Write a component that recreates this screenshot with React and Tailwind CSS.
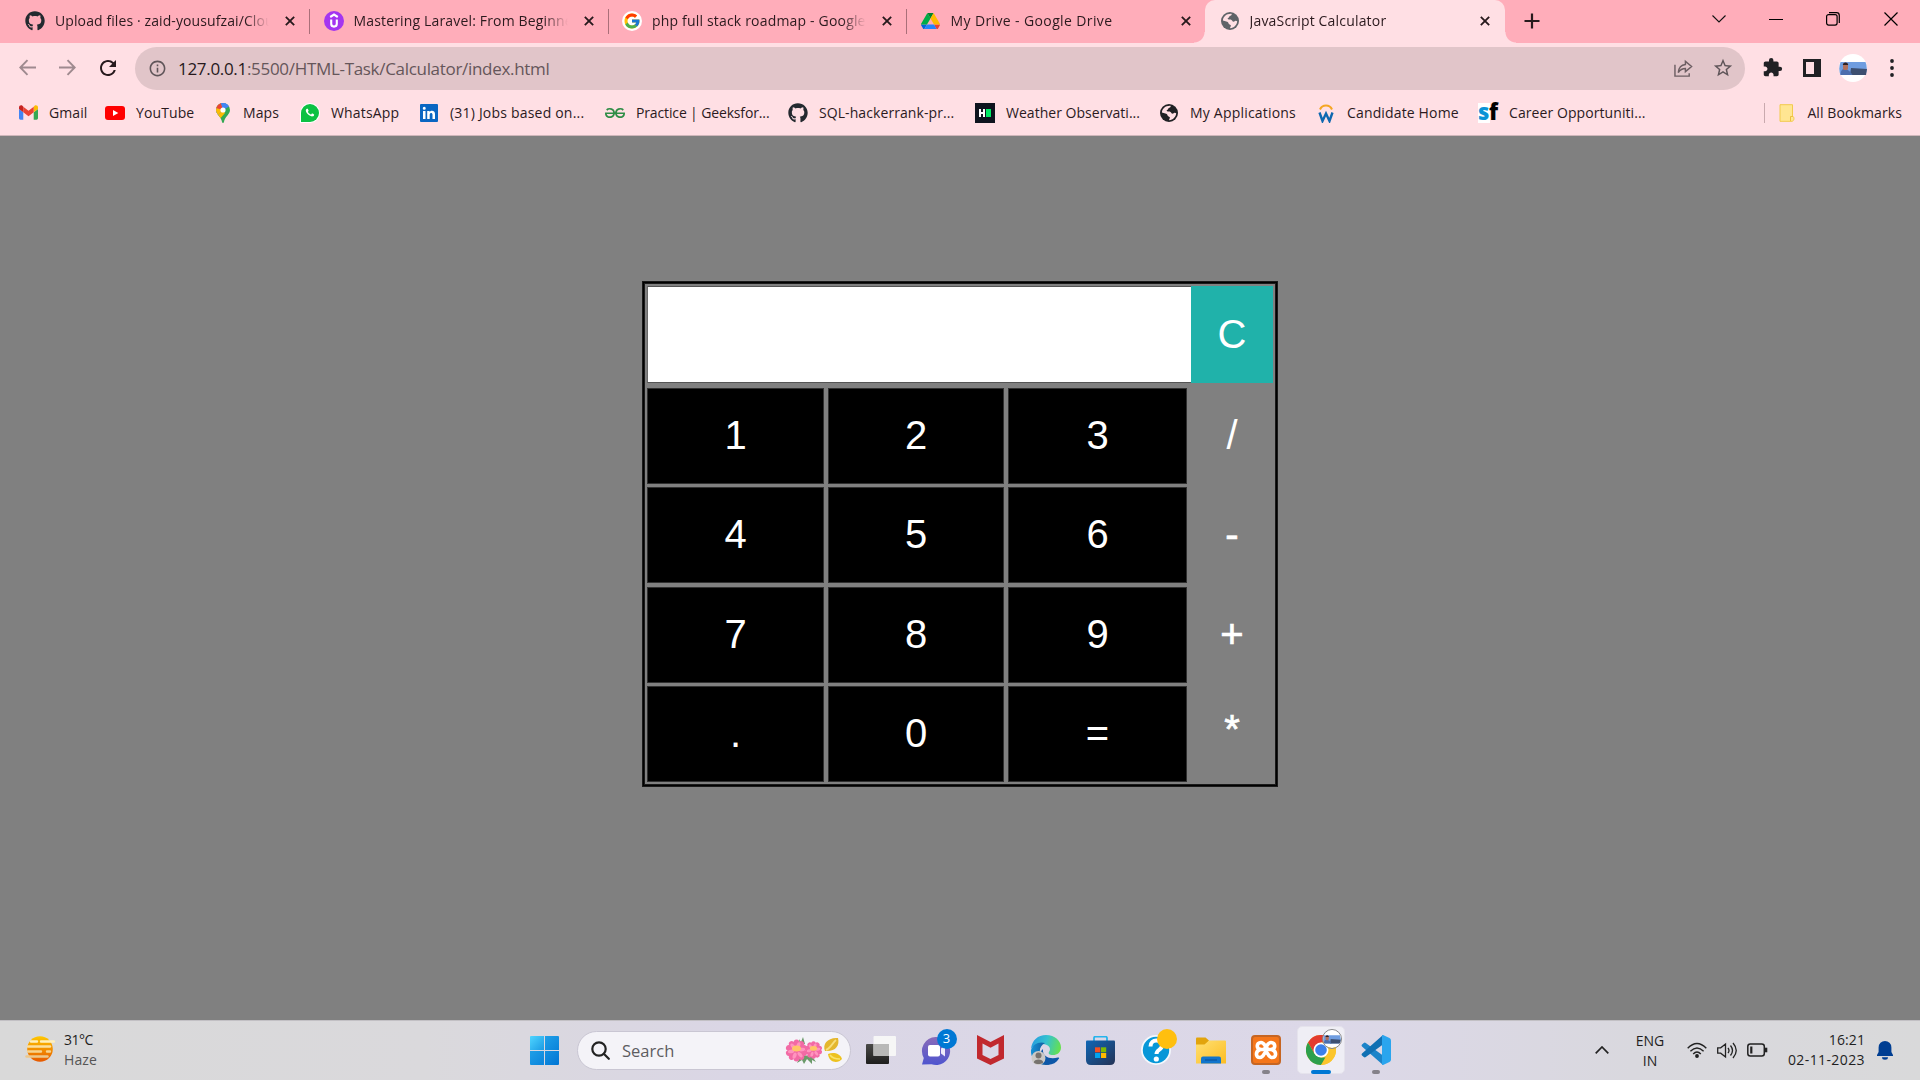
import React from "react";
import { FaGithub, FaWhatsapp } from "react-icons/fa";
import { FcGoogle } from "react-icons/fc";
import { SiGeeksforgeeks } from "react-icons/si";
import { MdRefresh, MdExtension, MdStarBorder, MdInfoOutline } from "react-icons/md";

const Cross = ({ className = "size-[11px]" }) => (
  <svg viewBox="0 0 12 12" className={className} fill="none" stroke="#27191c" strokeWidth="2.200">
    <path d="M1 1 11 11M11 1 1 11" />
  </svg>
);

const Globe = ({ className }) => (
  <svg viewBox="0 0 18 18" className={className}>
    <circle cx="9" cy="9" r="9" fill="currentColor" />
    <path d="M10.500 1.800c.6 1.200-.2 1.800-1.500 2.200-1.200.4-.6 1.600-1.800 2-1.200.3-.3 1.600.8 1.500 1.800-.2 3 .2 3.400 1.600.3.900 1.600.7 2.300.1 1-.8 1.800-.4 2.500 0C15.800 13 13 16 9.300 16.200c-.6-1 .8-1.500.6-2.600-.1-1.200-2.300-1-2.500-2.600C7.200 9.500 4 9.300 1.900 8.500 2.200 4.500 5.500 1.500 10.500 1.800z" fill="#ffdfe4" />
    <path d="M9 4.200c1.200-.2 2.500-.4 2.500-1.700l3.500 2 1 3.500c-1.500-.3-2.500.8-3.300.6C11.800 7 10 6.400 8 6.700z" fill="currentColor" />
  </svg>
);

const Udemy = () => (
  <svg viewBox="0 0 20 20" className="size-5">
    <circle cx="10" cy="10" r="10" fill="#a435f0" />
    <path d="M6.200 6 10 3.600 13.800 6M7.200 8.600v4.200a2.800 2.800 0 0 0 5.600 0V8.600" fill="none" stroke="#fff" strokeWidth="2.100" />
  </svg>
);

const GoogleTab = () => (
  <span className="flex size-5 items-center justify-center rounded-full bg-white">
    <FcGoogle className="size-[18px]" />
  </span>
);

const Drive = () => (
  <svg viewBox="0 0 87.3 78" className="w-[19px]">
    <path d="m6.6 66.85 3.85 6.65c.8 1.4 1.95 2.5 3.3 3.3l13.75-23.8h-27.5c0 1.55.4 3.1 1.2 4.5z" fill="#0066da" />
    <path d="m43.65 25-13.75-23.8c-1.35.8-2.5 1.9-3.3 3.3l-25.4 44a9 9 0 0 0-1.2 4.5h27.5z" fill="#00ac47" />
    <path d="m73.55 76.8c1.35-.8 2.5-1.9 3.3-3.3l1.6-2.75 7.65-13.25c.8-1.4 1.2-2.95 1.2-4.5h-27.5l5.85 11.5z" fill="#ea4335" />
    <path d="m43.65 25 13.75-23.8c-1.35-.8-2.9-1.2-4.5-1.2h-18.5c-1.6 0-3.15.45-4.5 1.2z" fill="#00832d" />
    <path d="m59.8 53h-32.3l-13.75 23.8c1.35.8 2.9 1.2 4.5 1.2h50.8c1.6 0 3.15-.45 4.5-1.2z" fill="#2684fc" />
    <path d="m73.4 26.5-12.7-22c-.8-1.4-1.95-2.5-3.3-3.3l-13.75 23.8 16.15 28h27.45c0-1.55-.4-3.1-1.2-4.5z" fill="#ffba00" />
  </svg>
);

const Gmail = () => (
  <svg viewBox="0 0 20 16" className="w-[19px]">
    <path d="M1.500 15.500h3V7.700L0 4.300V14a1.500 1.500 0 0 0 1.500 1.500z" fill="#4285f4" />
    <path d="M15.500 15.500h3A1.500 1.500 0 0 0 20 14V4.300l-4.500 3.400z" fill="#34a853" />
    <path d="M15.500 1.800v5.900L20 4.300V2.500c0-2-2.200-2.800-3.600-1.700z" fill="#fbbc04" />
    <path d="M4.500 7.700V1.800L10 6l5.500-4.200v5.900L10 11.900z" fill="#ea4335" />
    <path d="M0 2.500v1.800l4.500 3.400V1.800l-.9-1C2.200-.3 0 .5 0 2.500z" fill="#c5221f" />
  </svg>
);

const YouTube = () => (
  <svg viewBox="0 0 20 14" className="w-5">
    <rect width="20" height="14" rx="3" fill="#f00" />
    <path d="M8 4v6l5.300-3z" fill="#fff" />
  </svg>
);

const MapsPin = () => (
  <svg viewBox="0 0 14 20" className="ml-[2px] h-5">
    <defs>
      <clipPath id="pin"><path d="M7 0a7 7 0 0 0-7 7c0 4.500 5.200 6.500 6.100 12.200.2 1 1.600 1 1.800 0C8.800 13.500 14 11.500 14 7a7 7 0 0 0-7-7z" /></clipPath>
    </defs>
    <g clipPath="url(#pin)">
      <rect width="14" height="20" fill="#34a853" />
      <path d="M0 0h14L0 15z" fill="#4285f4" />
      <path d="M0 0h4.500L7 7-1 15z" fill="#fbbc04" />
      <path d="M0 0h5l2 7-7-2z" fill="#ea4335" />
      <path d="M5 0h9v3L7 7z" fill="#4285f4" />
      <path d="M-1 15 7 7l2 3-6 7z" fill="#fbbc04" />
    </g>
    <circle cx="7" cy="7" r="2.600" fill="#fff" />
  </svg>
);

const WhatsApp = () => (
  <span className="flex size-5 items-center justify-center rounded-full rounded-bl-none bg-white">
    <span className="flex size-[18px] items-center justify-center rounded-full rounded-bl-sm bg-[#0cc143]">
      <FaWhatsapp className="size-[19px] text-white [clip-path:circle(30%)]" />
    </span>
  </span>
);

const LinkedIn = () => (
  <svg viewBox="0 0 18 18" className="size-[18px]">
    <rect width="18" height="18" rx="1" fill="#0a66c2" />
    <path d="M3 7h2.500v8H3zM4.250 2.700a1.500 1.500 0 1 1 0 3 1.500 1.500 0 0 1 0-3zM7.200 7h2.400v1.100C10.800 6.200 15 6.200 15 10v5h-2.500v-4.500c0-2.200-2.800-2-2.800 0V15H7.200z" fill="#fff" />
  </svg>
);

const HackerRank = () => (
  <svg viewBox="0 0 20 20" className="size-5">
    <rect width="20" height="20" fill="#0e141e" />
    <path d="M4 6h2v3h2V6h2v8H8v-3H6v3H4z" fill="#fff" />
    <rect x="11" y="6" width="5" height="8" fill="#00ea64" />
  </svg>
);

const Workday = () => (
  <svg viewBox="0 0 18 20" className="h-5 w-[18px]">
    <path d="M3 6.500a6.500 6.500 0 0 1 12 0" fill="none" stroke="#f5a623" strokeWidth="2" />
    <path d="m2.500 9.500 3 8.500L9 10.500l3.500 7.500 3-8.500" fill="none" stroke="#0f68b0" strokeWidth="2.400" />
  </svg>
);

const SuccessFactors = () => (
  <span className="flex h-5 w-5 items-center bg-[linear-gradient(90deg,#fff_60%,#ffdfe4_60%)] pb-[3px] font-['Open_Sans',sans-serif] text-[22px] leading-5 font-extrabold tracking-[-0.5px]">
    <span className="text-[#0a93d6]">s</span>
    <span className="text-black">f</span>
  </span>
);

const Avatar = ({ className }) => (
  <svg viewBox="0 0 28 28" className={className}>
    <circle cx="14" cy="14" r="14" fill="#fff" />
    <path d="M1.500 8h25q2.500 6 0 13h-25q-2.500-6 0-13z" fill="#6f9de0" />
    <path d="M12 14l16 1-1 6H11z" fill="#3d4f70" />
    <path d="M1.500 21c0-5 2-6 4-6s5 1 8 6z" fill="#4c6fae" />
    <path d="M4 10.500c0-2.500 5-2.500 5 0v4c0 2-5 2-5 0z" fill="#b0705c" />
    <path d="M3.800 11c0-3.500 5.400-3.500 5.400 0z" fill="#2b2226" />
  </svg>
);

const tabs = [
  { title: "Upload files · zaid-yousufzai/Clou", icon: <FaGithub className="size-5 text-[#24292f]" />, track: "tracking-[0.1px]" },
  { title: "Mastering Laravel: From Beginne", icon: <Udemy />, track: "tracking-[0.16px]" },
  { title: "php full stack roadmap - Google", icon: <GoogleTab />, track: "tracking-[0.18px]" },
  { title: "My Drive - Google Drive", icon: <Drive />, track: "tracking-[0.38px]" },
];

function TabBody({ tab }) {
  return (
    <>
      <span className="flex w-5 shrink-0 justify-center">{tab.icon}</span>
      <span className={`mb-[2px] ml-[10px] w-[216px] shrink-0 overflow-hidden whitespace-nowrap [mask-image:linear-gradient(90deg,#000_88%,transparent_99%)] ${tab.track}`}>{tab.title}</span>
      <Cross className="ml-[14px] size-[10px] shrink-0" />
    </>
  );
}

function TabStrip() {
  return (
    <div className="flex h-[43px] bg-[#ffadba] text-[14px] text-[#2b1a1e]">
      <div className="flex pl-[13px]">
        {tabs.map((t, i) => (
          <div key={t.title} className={`flex h-[42px] items-center pl-[12px] ${i === 3 ? "w-[295px]" : "w-[298.500px]"}`}>
            <TabBody tab={t} />
            {i < 3 && <span className="ml-[14px] h-[25px] w-px bg-[#aa6f79]" />}
          </div>
        ))}
      </div>
      <div className="flex items-end">
        <span className="-ml-[10px] size-[11px] bg-[radial-gradient(circle_at_0_0,transparent_10px,#ffdfe4_11px)]" />
        <div className="flex h-[43px] w-[300px] items-center rounded-t-[10px] bg-[#ffdfe4] pb-px pl-[15px]">
          <TabBody tab={{ title: "JavaScript Calculator", icon: <Globe className="size-[18px] text-[#5f6368]" />, track: "tracking-[0.18px]" }} />
        </div>
        <span className="size-[11px] bg-[radial-gradient(circle_at_100%_0,transparent_10px,#ffdfe4_11px)]" />
      </div>
      <svg viewBox="0 0 16 16" className="mt-[13px] ml-[8px] size-4" stroke="#27191c" strokeWidth="2.200"><path d="M8 .5v15M.5 8h15" /></svg>
      <div className="mt-[11px] ml-auto flex h-4 items-center pr-[22px]">
        <svg viewBox="0 0 14 8" className="mr-[43px] w-[14px]" fill="none" stroke="#111" strokeWidth="1.100"><path d="m.5.500 6.500 6.500 6.500-6.500" /></svg>
        <span className="mr-[43px] h-px w-[14px] bg-black" />
        <svg viewBox="0 0 14 14" className="mr-[44px] size-[14px]" fill="none" stroke="#000" strokeWidth="1.200"><rect x=".6" y="2.600" width="10.500" height="10.500" rx="2" /><path d="M3 .7h7.500q2.800 0 2.800 2.800V11" /></svg>
        <svg viewBox="0 0 14 14" className="size-[14px]" fill="none" stroke="#000" strokeWidth="1.200"><path d="m.5.500 13 13m0-13-13 13" /></svg>
      </div>
    </div>
  );
}

function Toolbar() {
  return (
    <div className="flex h-[50px] items-center bg-[#ffdfe4] pr-[26px] pb-px">
      <svg viewBox="0 0 16 16" className="ml-[19px] w-[17px]" fill="none" stroke="#9f8a8f" strokeWidth="1.800"><path d="M16 8H1.500M8 1 1.200 8 8 15" /></svg>
      <svg viewBox="0 0 16 16" className="ml-[23px] w-[17px]" fill="none" stroke="#9f8a8f" strokeWidth="1.800"><path d="M0 8h14.500M8 1l6.800 7L8 15" /></svg>
      <MdRefresh className="ml-[20px] size-6 text-[#27191c]" />
      <div className="mt-px ml-[15px] flex h-[43px] flex-1 items-center rounded-full bg-[#e1c5c9] pr-[11px] pl-[13px]">
        <MdInfoOutline className="size-[19px] text-[#5f5559]" />
        <span className="mt-[2px] ml-[11px] text-[17px] tracking-[-0.31px] text-[#65565a]"><span className="text-[#27191c]">127.0.0.1</span>:5500/HTML-Task/Calculator/index.html</span>
        <svg viewBox="0 0 20 20" className="ml-auto size-[19px]" fill="none" stroke="#6c5e62" strokeWidth="1.500">
          <path d="M1 6v12h15v-3" /><path d="M12 2.500v3.300c-5 .4-7 3.700-7.500 8.500 2-3 4-4.300 7.500-4.300v3.300l6.500-5.400z" />
        </svg>
        <MdStarBorder className="ml-[19px] size-[22px] text-[#5f5559]" />
      </div>
      <MdExtension className="ml-[17px] size-[21px] text-[#202124]" />
      <span className="ml-[20px] h-[18px] w-[18px] border-3 border-r-[7px] border-[#202124]" />
      <Avatar className="ml-[18px] size-7" />
      <svg viewBox="0 0 4 18" className="ml-[23px] h-[18px] w-1" fill="#202124"><circle cx="2" cy="2" r="1.900" /><circle cx="2" cy="9" r="1.900" /><circle cx="2" cy="16" r="1.900" /></svg>
    </div>
  );
}

const bookmarks = [
  ["Gmail", <Gmail />, "w-[87px]", "tracking-[0.1px]"],
  ["YouTube", <YouTube />, "w-[107px]", "tracking-[0.1px]"],
  ["Maps", <MapsPin />, "w-[88px]", "tracking-[0.1px]"],
  ["WhatsApp", <WhatsApp />, "w-[119px]", "tracking-[0.15px]"],
  ["(31) Jobs based on...", <LinkedIn />, "w-[186px]", "tracking-[0.2px]"],
  ["Practice | Geeksfor...", <SiGeeksforgeeks className="size-5 text-[#2f8d46]" />, "w-[183px]", "tracking-[-0.14px]"],
  ["SQL-hackerrank-pr...", <FaGithub className="size-5 text-[#24292f]" />, "w-[187px]", "tracking-[0.08px]"],
  ["Weather Observati...", <HackerRank />, "w-[184px]", "tracking-[0.03px]"],
  ["My Applications", <Globe className="size-[18px] text-[#202124]" />, "w-[157px]", "tracking-[0.2px]"],
  ["Candidate Home", <Workday />, "w-[162px]", "tracking-[0.15px]"],
  ["Career Opportuniti...", <SuccessFactors />, "w-[180px]", "tracking-[0.08px]"],
];

function BookmarksBar() {
  return (
    <div className="flex h-[43px] items-center border-b border-[#cfb6ba] bg-[#ffdfe4] pb-[3px] pl-[18px] text-[14px] text-[#2b1a1e]">
      {bookmarks.map(([label, icon, w, track]) => (
        <div key={label} className={`flex shrink-0 items-center ${w}`}>
          <span className="flex w-5 shrink-0 justify-center">{icon}</span>
          <span className={`ml-[11px] whitespace-nowrap ${track}`}>{label}</span>
        </div>
      ))}
      <span className="ml-auto h-5 w-px bg-[#c9a9ae]" />
      <svg viewBox="0 0 16 18" className="ml-[14px] h-[18px] w-4"><path d="M1 .7h12.500v11.500c2 .4 2 4.800-.5 5.100H1z" fill="#ffe692" stroke="#f2ca4c" /><path d="M11.500 17v-4.500h2.500" fill="none" stroke="#eebf3f" /></svg>
      <span className="mr-[18px] ml-[12px] tracking-[0.1px] whitespace-nowrap">All Bookmarks</span>
    </div>
  );
}

const rows = [["1", "2", "3", "/"], ["4", "5", "6", "-"], ["7", "8", "9", "+"], [".", "0", "=", "*"]];

const operatorStyle = {
  "/": "",
  "-": "[-webkit-text-stroke:0.7px_white]",
  "+": "[-webkit-text-stroke:0.7px_white]",
  "*": "pb-[10px] [-webkit-text-stroke:0.7px_white]",
};

function Calculator() {
  return (
    <div className="h-[506px] w-[636px] border-[3px] border-[#1a1a1a] pt-[2px] pl-[2px] font-['Liberation_Sans',Arial,sans-serif] text-[40px] leading-none text-white outline-1 -outline-offset-2 outline-black">
      <div className="flex h-[97px]">
        <div className="w-[544px] border border-r-0 border-[#555] border-l-[#6a6a6a] bg-white" />
        <div className="flex w-[82px] items-center justify-center bg-[#20b2aa] pb-px">C</div>
      </div>
      <div className="mt-[5px] grid grid-cols-[177px_176px_179px_82px] gap-x-1 gap-y-[3.300px]">
        {rows.flat().map((key, i) => (
          <div key={key} className={`flex h-[96px] items-center justify-center pb-[2px] ${i % 4 === 3 ? operatorStyle[key] : "border border-[#303030] bg-black"}`}>{key}</div>
        ))}
      </div>
    </div>
  );
}

const StartLogo = () => (
  <svg viewBox="0 0 29 29" className="size-[29px]">
    <defs>
      <linearGradient id="win" x1="0" y1="0" x2="1" y2="1"><stop stopColor="#4fd5ff" /><stop offset="1" stopColor="#1b9be4" /></linearGradient>
      <linearGradient id="win2" x1="0" y1="0" x2="1" y2="1"><stop stopColor="#2aaeee" /><stop offset="1" stopColor="#0075d4" /></linearGradient>
    </defs>
    <path d="M0 1q0-1 1-1h13v14H0z" fill="url(#win)" />
    <path d="M15 0h13q1 0 1 1v13H15zM0 15h14v14H1q-1 0-1-1zM15 15h14v13q0 1-1 1H15z" fill="url(#win2)" />
  </svg>
);

const Blossom = ({ x, y, s }) => (
  <g transform={`translate(${x} ${y}) scale(${s})`}>
    <circle r="8.500" fill="#f26aa5" />
    <g fill="#f26aa5">
      {[0, 36, 72, 108, 144, 180, 216, 252, 288, 324].map((a) => <ellipse key={a} cx="0" cy="-7.500" rx="3" ry="3.500" transform={`rotate(${a})`} />)}
    </g>
    <g fill="#ff94be">
      {[20, 80, 140, 200, 260, 320].map((a) => <ellipse key={a} cx="0" cy="-5.500" rx="1.800" ry="3.200" transform={`rotate(${a})`} />)}
    </g>
    <ellipse cx="0" cy="-2" rx="4.500" ry="3" fill="#ffc568" />
  </g>
);

const Flowers = () => (
  <svg viewBox="0 0 58 30" className="h-[30px] w-[58px]">
    <path d="m20 8-2-7-2 5-2-3 1 7zM27 20l4 6-4-2v4l-5-5-3 5-2-4-5 3 4-8z" fill="#6c9b6b" />
    <Blossom x={28.5} y={14} s={0.8} />
    <Blossom x={11.5} y={14.5} s={1} />
    <path d="M53 2c2 8-3 14-13 13C37 8 43 1 53 2z" fill="#e4b72d" /><path d="M51 4c-3 2-5 8-10 10" stroke="#f8df7b" strokeWidth="2" fill="none" />
    <path d="M43 18c5-2 12-1 14 5-4 5-13 4-14-5z" fill="#edc21f" /><path d="M45 19c2 3 6 4 10 4" stroke="#f9e36b" strokeWidth="1.500" fill="none" />
  </svg>
);

const TaskView = () => (
  <svg viewBox="0 0 30 28" className="h-7 w-[30px]">
    <defs><linearGradient id="tv" x2="0" y2="1"><stop stopColor="#4a4a48" /><stop offset="1" stopColor="#1e1e1d" /></linearGradient></defs>
    <rect y="8" width="23" height="20" rx="1" fill="url(#tv)" />
    <rect x="7.500" width="22.500" height="20" rx="1" fill="#f6f6f6" />
    <path d="M7.500 8H23v12H7.500z" fill="#b8b8b7" />
  </svg>
);

const Chat = () => (
  <svg viewBox="0 0 30 29" className="h-[29px] w-[30px]">
    <defs><linearGradient id="chat" x2="0" y2="1"><stop stopColor="#8a6bb8" /><stop offset="1" stopColor="#4e55cf" /></linearGradient></defs>
    <path d="M14.500 1a14 14 0 1 1-4 27.200L1 28.500l1.800-6.500A14 14 0 0 1 14.500 1z" fill="url(#chat)" />
    <rect x="7" y="9" width="12" height="11.500" rx="2" fill="#fff" /><path d="m20 12.500 4-3v11l-4-3z" fill="#eeeafb" />
  </svg>
);

const McAfee = () => (
  <svg viewBox="0 0 27 30" className="h-[30px] w-[27px]">
    <path d="M0 0 13.500 7 27 0v23.500L13.500 30 0 23.500zM5.500 8.500v11.500l8 4 8-4V8.500l-8 4.200z" fill="#c1292e" fillRule="evenodd" />
  </svg>
);

const Edge = () => (
  <svg viewBox="0 0 30 30" className="size-[30px]">
    <defs>
      <linearGradient id="e1" x1="0" x2="1" y1=".3" y2=".5"><stop stopColor="#259be0" /><stop offset=".5" stopColor="#35c2cf" /><stop offset="1" stopColor="#66e04f" /></linearGradient>
      <linearGradient id="e2" x1="0" x2="1"><stop stopColor="#1493d8" /><stop offset="1" stopColor="#114a8b" /></linearGradient>
    </defs>
    <path d="M0 14C1 5 7 0 15 0c9 0 15 6 15 12.500 0 5-4 7.500-8 7.500-4 0-5-1.500-4-3 3-4-1-8-6.500-8C6 9 2 11 0 14z" fill="url(#e1)" />
    <path d="M0 15c2-6 8-9 14-7-4 2-6 6-5 11 1 5 5 9 10 10.500C8 32-1 24 0 15z" fill="url(#e2)" />
    <path d="M12 14c-1 7 6 11 15 8.500 1-.2 1.500.2 1 1C25 28.500 20 30.500 15 29.500 9 27 7 18 12 14z" fill="#0d57a8" />
    <circle cx="7.500" cy="23" r="7" fill="#cbc9c6" /><circle cx="7.500" cy="20.500" r="3" fill="#77736f" /><path d="M2.800 27.500c0-4 9.400-4 9.400 0-2.500 2-7 2-9.400 0z" fill="#77736f" />
  </svg>
);

const Store = () => (
  <svg viewBox="0 0 29 29" className="size-[29px]">
    <defs><linearGradient id="st" x2="1" y2="1"><stop stopColor="#0f66b5" /><stop offset="1" stopColor="#243356" /></linearGradient></defs>
    <path d="M8 6V2q0-1.300 1.300-1.300h10.400Q21 .7 21 2v4" fill="none" stroke="#27b4ec" strokeWidth="1.800" />
    <path d="M1 4.500h27q1 0 1 1V24q0 5-5 5H5q-5 0-5-5V5.500q0-1 1-1z" fill="url(#st)" />
    <path d="M9 11.300h5.200v5H9z" fill="#f25022" /><path d="M15 11.300h5.200v5H15z" fill="#7fba00" /><path d="M9 17h5.200v5H9z" fill="#00a4ef" /><path d="M15 17h5.200v5H15z" fill="#ffb900" />
  </svg>
);

const Help = () => (
  <svg viewBox="0 0 30 30" className="size-[30px]">
    <circle cx="15" cy="15" r="15" fill="#f4f8fc" /><circle cx="15" cy="15" r="13.200" fill="#0797d8" />
    <path d="M9.500 11.500C9.500 3.500 21 4 21 10.500c0 4.500-5.500 4-5.500 8.500" fill="none" stroke="#fff" strokeWidth="4" /><circle cx="15.300" cy="24" r="2.600" fill="#fff" />
  </svg>
);

const Folder = () => (
  <svg viewBox="0 0 30 27" className="h-[27px] w-[30px]">
    <defs><linearGradient id="fo" x2="1" y2="1"><stop stopColor="#ffe073" /><stop offset="1" stopColor="#fcbd22" /></linearGradient></defs>
    <path d="M0 1.500Q0 .5 1 .5h8.500L13 3.500 10 8H0z" fill="#e2a40c" />
    <path d="M0 7.500h8.500L13 3.500h16q1 0 1 1v22H0z" fill="url(#fo)" />
    <path d="M5 26.500v-5q0-2 2-2h16q2 0 2 2v5z" fill="#1175cc" /><path d="M9 23h12" stroke="#0a4e93" />
  </svg>
);

const Xampp = () => (
  <svg viewBox="0 0 30 30" className="size-[30px]">
    <rect x="1" y="1" width="28" height="28" rx="3" fill="#f5761a" stroke="#c66522" strokeWidth="2" />
    <g fill="none" stroke="#fff" strokeWidth="3.600" strokeLinecap="round" strokeLinejoin="round">
      <path d="M12.500 14.500H10c-5 0-5-7 0-7 3 0 3.500 3 6 5.500M17.500 14.500H20c5 0 5-7 0-7-3 0-3.500 3-6 5.500" />
      <path d="M9 14.500c-5 2-4.500 8 0 8 4 0 3.500-4.500 7-7.500M21 14.500c5 2 4.500 8 0 8-4 0-3.500-4.500-7-7.500" />
    </g>
  </svg>
);

const Chrome = () => (
  <svg viewBox="0 0 30 30" className="size-[30px]">
    <circle cx="15" cy="15" r="15" fill="#fbc52c" />
    <path d="M2 7.500A15 15 0 0 1 28 7.500H15L8.500 18.750z" fill="#e33b2e" />
    <path d="M2 7.500 8.500 18.750 15 22.500h6.500L15 30A15 15 0 0 1 2 7.500z" fill="#2da04c" />
    <path d="M21.500 18.750 15 30a15 15 0 0 0 13-22.500H15z" fill="#fbc52c" />
    <circle cx="15" cy="15" r="7.500" fill="#fff" /><circle cx="15" cy="15" r="5.800" fill="#3c80ea" />
  </svg>
);

const VSCode = () => (
  <svg viewBox="0 0 30 30" className="size-[30px]">
    <path d="M22 30 1 11.500q-1-1 0-2L2.800 8q1-.8 2 0L24 22z" fill="#1c84c9" />
    <path d="M22 0 1 18.500q-1 1 0 2L2.800 22q1 .8 2 0L24 8z" fill="#1070b3" />
    <path d="M22 0l6.500 3q1.500.7 1.500 2.500v19q0 1.800-1.500 2.500L22 30q-1 0-1-1V1q0-1 1-1z" fill="#2aa5ee" />
  </svg>
);

const Sun = () => (
  <svg viewBox="0 0 30 26" className="h-[26px] w-[30px]">
    <defs><linearGradient id="sun" x2="0" y2="1"><stop stopColor="#ffc800" /><stop offset="1" stopColor="#e65800" /></linearGradient></defs>
    <circle cx="15" cy="13" r="12.800" fill="url(#sun)" />
    <g strokeLinecap="round" strokeWidth="2.400"><path d="M6 5.500h6M16 5.500h13" stroke="#fff0bd" /><path d="M3 10.500h22" stroke="#fbe0a0" /><path d="M3 15.500h13M22 15.500h3" stroke="#f6d390" /><path d="M1.500 20.500h21" stroke="#edc78b" /></g>
  </svg>
);

const Slot = ({ children, mark, active }) => (
  <div className="relative flex w-[55px] items-center justify-center">
    {active && <span className="absolute inset-x-[3.500px] top-0 h-12 rounded-[5px] border border-[#e5e3ec] bg-[#efeef5]" />}
    <span className="relative">{children}</span>
    {mark && <span className={`absolute bottom-0 h-1 rounded-full ${active ? "w-5 bg-[#0078d4]" : "w-2 bg-[#85828a]"}`} />}
  </div>
);

function Taskbar() {
  return (
    <div className="flex h-[60px] border-t border-[#c2c0c4] bg-[linear-gradient(90deg,#d9d9d9_0%,#dad9dc_22%,#dad6e5_38%,#dcd8e8_70%,#d9d8de_85%,#d9d9da_100%)] pt-[5px] text-[15px] text-[#1f1f1f]">
      <div className="flex w-[530px] pt-[3px] pl-[25px]">
        <div className="pt-[7px]"><Sun /></div>
        <div className="mt-px ml-[9px] text-[14px] leading-5"><div className="tracking-[-0.5px]">31°C</div><div className="tracking-[0.1px] text-[#555]">Haze</div></div>
      </div>
      <div className="flex h-12">
        <div className="flex items-center"><StartLogo /></div>
        <div className="mt-[5px] ml-[18px] flex h-[39px] w-[274px] items-center rounded-full border border-[#c9c6d3] bg-[#f4f3f8] pl-[13px]">
          <svg viewBox="0 0 19 19" className="size-[19px]" fill="none" stroke="#222" strokeWidth="2.200"><circle cx="8" cy="8" r="6.700" /><path d="m12.800 12.800 5 5" strokeLinecap="round" /></svg>
          <span className="mt-px ml-[12px] text-[16.500px] text-[#5d5c61]">Search</span>
          <div className="ml-auto pr-[7px]"><Flowers /></div>
        </div>
        <div className="ml-[2px] flex">
          <Slot><TaskView /></Slot>
          <Slot><Chat /><span className="absolute -top-[7px] left-[16px] flex size-5 items-center justify-center rounded-full bg-[#0078d4] text-[13px] text-white">3</span></Slot>
          <Slot><McAfee /></Slot>
          <Slot><Edge /></Slot>
          <Slot><Store /></Slot>
          <Slot><Help /><span className="absolute -top-[6px] left-[16px] size-5 rounded-full bg-[#ffbf0f]" /></Slot>
          <Slot><Folder /></Slot>
          <Slot mark><Xampp /></Slot>
          <Slot mark active><Chrome /><Avatar className="absolute -top-[6px] left-[16px] size-5 rounded-full border border-[#888]" /></Slot>
          <Slot mark><VSCode /></Slot>
        </div>
      </div>
      <div className="ml-auto flex h-12 items-center pr-[27px]">
        <svg viewBox="0 0 14 8" className="w-[14px]" fill="none" stroke="#222" strokeWidth="1.700"><path d="M.7 7.300 7 1l6.300 6.300" /></svg>
        <div className="mt-px ml-[26px] w-[30px] text-center text-[14px] leading-5"><div>ENG</div><div>IN</div></div>
        <svg viewBox="0 0 20 16" className="ml-[22px] h-4 w-5" fill="none" stroke="#222" strokeWidth="1.400"><path d="M.7 6.200q9.300-9.500 18.600 0M3.400 9.200q6.600-6.600 13.200 0M6.200 12q3.800-3.900 7.600 0" /><circle cx="10" cy="14" r="1.200" fill="#222" /></svg>
        <svg viewBox="0 0 21 17" className="ml-[10px] h-[17px] w-[21px]" fill="none" stroke="#222" strokeWidth="1.300"><path d="M.7 5.800v5.400h3L8.500 15V2L3.700 5.800zM11 5.800q2 2.700 0 5.400M13.500 3.500q4 5 0 10M16 1q6.500 7.500 0 15" /></svg>
        <svg viewBox="0 0 21 14" className="ml-[9px] h-[14px] w-[21px]" fill="none" stroke="#222" strokeWidth="1.500"><rect x=".8" y="1" width="16.500" height="12" rx="2.500" /><path d="M4.300 3.500v7" strokeWidth="2.200" /><path d="M19 4.700v4.600" strokeWidth="2.600" /></svg>
        <div className="ml-[19px] w-[78px] text-right text-[14px] leading-5"><div className="tracking-[0.1px]">16:21</div><div className="tracking-[0.4px] whitespace-nowrap">02-11-2023</div></div>
        <svg viewBox="0 0 16 19" className="ml-[12px] h-[19px] w-4" fill="#003e92"><path d="M8 0a6.400 6.400 0 0 0-6.400 6.400V11L0 14v1h16v-1l-1.600-3V6.400A6.400 6.400 0 0 0 8 0zM5 16.200h6a3 2.500 0 0 1-6 0z" /></svg>
      </div>
    </div>
  );
}

export default function App() {
  return (
    <div className="flex h-[1080px] w-[1920px] flex-col overflow-hidden bg-[#808080] font-['Open_Sans','Noto_Sans',sans-serif]">
      <TabStrip />
      <Toolbar />
      <BookmarksBar />
      <main className="flex flex-1 justify-center pt-[145px]">
        <Calculator />
      </main>
      <Taskbar />
    </div>
  );
}
